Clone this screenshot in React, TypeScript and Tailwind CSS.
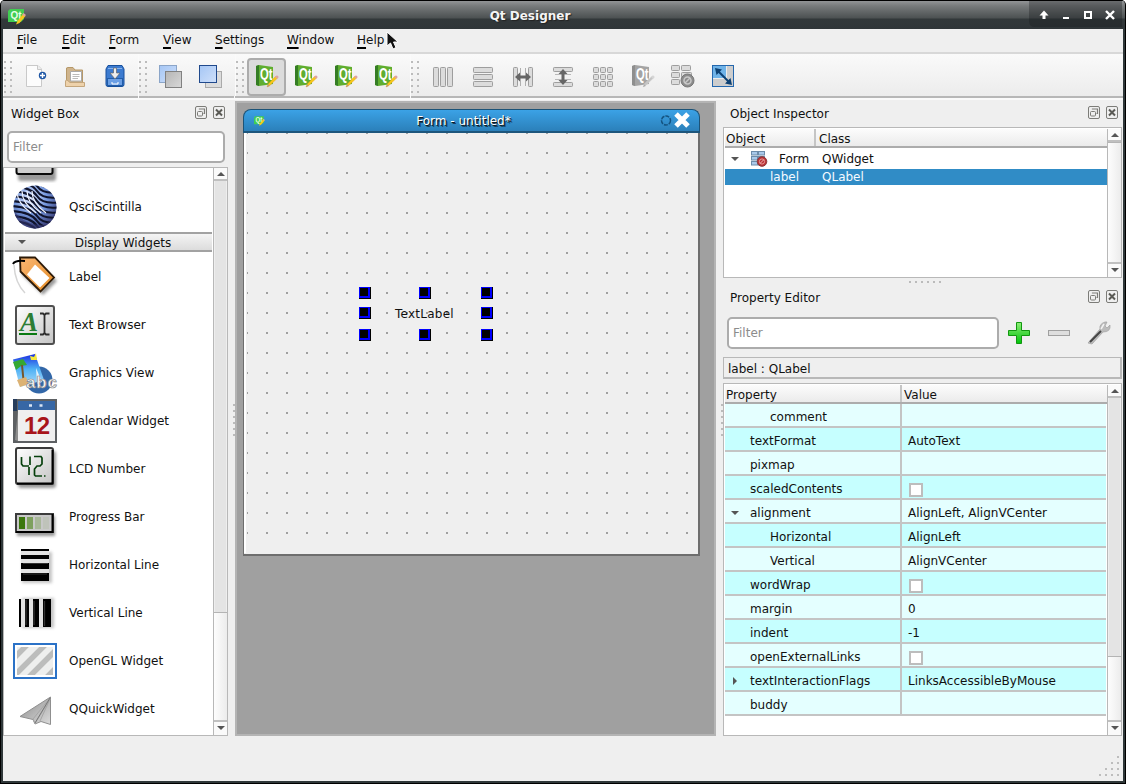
import React from "react";

const DOTS = [0, 1, 2, 3, 4, 5];

function Handle({ w }: { w: string }) {
  return (
    <div className={`${w} h-[42px] shrink-0 border-l border-[#fbfbfb]`}>
      <svg width="10" height="42" className="block" shapeRendering="crispEdges">
        {DOTS.map((i) => (
          <g key={i}>
            <rect x="0" y={7 + i * 6} width="2" height="2" fill="#bcbcbc" />
            <rect x="6" y={7 + i * 6} width="2" height="2" fill="#bcbcbc" />
          </g>
        ))}
      </svg>
    </div>
  );
}

function Tool({ children, active }: { children: React.ReactNode; active?: boolean }) {
  return (
    <div className="flex h-[42px] w-10 shrink-0 items-center justify-center">
      {active ? (
        <div className="ml-px mt-[3px] flex h-[38px] w-10 items-center justify-center rounded-[4px] border-2 border-[#acacac] bg-[#dcdcdc] pb-px">{children}</div>
      ) : (
        <div className="pt-[2px]">{children}</div>
      )}
    </div>
  );
}

function QtIcon({ gray, size = 24 }: { gray?: boolean; size?: number }) {
  const a = gray ? "#a4a4a4" : "#5fae30";
  const b = gray ? "#8e8e8e" : "#357d25";
  return (
    <svg width={size} height={size} viewBox="0 0 24 24" className="block">
      <path d="M1 2 L4 1 L18 3 V20 L4 22 L1 21Z" fill={a} />
      <path d="M1 2 L4 1 V22 L1 21Z" fill={b} />
      <text x="5" y="16" fontFamily="Liberation Sans" fontSize="16.500" fontWeight="700" fill="#fff" textLength="12.500" lengthAdjust="spacingAndGlyphs">Qt</text>
      <path d="M12 23 L13.500 19.800 L20.500 12.500 L22.300 14.300 L15 21.300Z" fill={gray ? "#c4c4c4" : "#f8c818"} stroke={gray ? "#d8d8d8" : "#e59a16"} strokeWidth=".4" />
      <path d="M20 13 L22 11.200 L23.800 13 L22.200 14.800Z" fill={gray ? "#d5d5d5" : "#dda1a1"} />
      <path d="M12 23 L13.300 20.200 L14.800 22Z" fill={gray ? "#aaa" : "#b69a72"} />
    </svg>
  );
}

function SmallQt({ size }: { size: number }) {
  return (
    <svg width={size} height={size} viewBox="0 0 18 18" className="block">
      <path d="M2 2 H16 V12 L13 15 H0 V4Z" fill="#41cd52" />
      <text x="2.5" y="12" fontFamily="Liberation Sans" fontSize="11" fontWeight="700" fill="#e8ffe8" textLength="11" lengthAdjust="spacingAndGlyphs">Qt</text>
      <path d="M8 17.5 L9.5 14 L15 7 L17.5 9 L11.5 16Z" fill="#f6c81c" />
      <path d="M14.3 7.8 L15.5 6 L18 8 L16.6 9.6Z" fill="#dda1a1" />
    </svg>
  );
}

function Cell({ x, y, w, h }: { x: number; y: number; w: number; h: number }) {
  return <rect x={x + 0.5} y={y + 0.5} width={w - 1} height={h - 1} rx=".8" fill="#dcdcdc" stroke="#9e9e9e" />;
}

function ToolIcon({ name }: { name: string }) {
  return (
    <svg width="24" height="24" viewBox="0 0 24 24" className="block">
      <defs>
        <linearGradient id="bl" x1="0" y1="0" x2="1" y2="1"><stop offset="0" stopColor="#a5c6f5" /><stop offset="1" stopColor="#cfe0fa" /></linearGradient>
        <linearGradient id="gr" x1="0" y1="0" x2="1" y2="1"><stop offset="0" stopColor="#b5b5b5" /><stop offset="1" stopColor="#d8d8d8" /></linearGradient>
      </defs>
      {name === "new" && (
        <g>
          <path d="M2.500 1.500 H14 L17.500 5 V22.500 H2.500Z" fill="#fcfcfc" stroke="#c9c9c9" />
          <path d="M13.500 1.500 V5.500 H17.500" fill="#eee" stroke="#c9c9c9" />
          <circle cx="18.500" cy="11.500" r="3.700" fill="#1f57a5" />
          <path d="M18.500 9 V14 M16 11.500 H21" stroke="#fff" strokeWidth="1.400" />
        </g>
      )}
      {name === "open" && (
        <g>
          <path d="M2.500 21 V4 L4 3.500 H9 L11 6 H18.500 V19" fill="#cfb48c" stroke="#b69868" />
          <path d="M6.500 7.500 H17.500 V17 H6.500Z" fill="#fff" stroke="#aaa" />
          <path d="M8.500 10.500 H15.500 M8.500 12.500 H15.500 M8.500 14.500 H14" stroke="#bbb" />
          <path d="M1.500 22.500 V17 Q1.500 16 3 16 L6 18.500 H20.500 V22.500Z" fill="#eed2ab" stroke="#c4a67c" />
        </g>
      )}
      {name === "save" && (
        <g>
          <path d="M4 1.500 H18 L20 5 V20.500 Q20 22.500 18 22.500 H4 Q2 22.500 2 20.500 V5Z" fill="#3c7bd0" stroke="#164f9c" />
          <path d="M4 4.500 H18" stroke="#87b4ed" />
          <rect x="3.500" y="14.500" width="15" height="7" fill="#6a9ee4" stroke="#225da8" />
          <path d="M8 18 V20 H14 V18" fill="none" stroke="#fff" />
          <path d="M9.500 4 H12.500 V9 H16 L11 15 L6 9 H9.500Z" fill="#eee" stroke="#666" strokeWidth=".7" />
        </g>
      )}
      {name === "back" && (
        <g>
          <rect x="1.500" y="1.500" width="17" height="17" fill="url(#bl)" stroke="#8ba5c8" />
          <rect x="7.500" y="7.500" width="16" height="16" fill="url(#gr)" stroke="#818181" />
        </g>
      )}
      {name === "front" && (
        <g>
          <rect x="7.500" y="7.500" width="16" height="16" fill="#dcdcdc" stroke="#aaa" />
          <rect x="1.500" y="1.500" width="17" height="17" fill="url(#bl)" stroke="#20498c" />
        </g>
      )}
      {name === "cols" && <g><Cell x={2} y={3} w={6} h={20} /><Cell x={9} y={3} w={6} h={20} /><Cell x={16} y={3} w={6} h={20} /></g>}
      {name === "rows" && <g><Cell x={2} y={3} w={20} h={6} /><Cell x={2} y={10} w={20} h={6} /><Cell x={2} y={17} w={20} h={6} /></g>}
      {name === "hsplit" && (
        <g>
          <Cell x={2} y={3} w={5} h={20} /><Cell x={17} y={3} w={5} h={20} />
          <path d="M9.500 4 V22 M14.500 4 V22" stroke="#b0b0b0" />
          <path d="M4 13 L9 8.500 V11.500 H15 V8.500 L20 13 L15 17.500 V14.500 H9 V17.500Z" fill="#666" />
        </g>
      )}
      {name === "vsplit" && (
        <g>
          <Cell x={2} y={3} w={20} h={5} /><Cell x={2} y={18} w={20} h={5} />
          <path d="M4 10.500 H20 M4 15.500 H20" stroke="#b8b8b8" />
          <path d="M12 5 L16.500 10 H13.500 V16 H16.500 L12 21 L7.500 16 H10.500 V10 H7.500Z" fill="#666" />
        </g>
      )}
      {name === "grid" && <g>{[3, 10, 17].map((y) => [2, 9, 16].map((x) => <Cell key={`${x}-${y}`} x={x} y={y} w={6} h={6} />))}</g>}
      {name === "break" && (
        <g>
          <Cell x={0} y={1} w={9} h={6} /><Cell x={10} y={1} w={10} h={6} />
          <Cell x={0} y={8} w={9} h={6} /><Cell x={10} y={8} w={11} h={6} /><Cell x={0} y={15} w={9} h={6} />
          <circle cx="16.500" cy="16.500" r="6.500" fill="#8c8c8c" stroke="#777" />
          <circle cx="16.500" cy="16.500" r="3.500" fill="none" stroke="#c8c8c8" strokeWidth="1.500" />
          <path d="M14 19 L19 14" stroke="#c8c8c8" strokeWidth="1.500" />
        </g>
      )}
      {name === "adjust" && (
        <g>
          <rect x="1.500" y="1.500" width="21" height="21" fill="#cdcdcd" stroke="#2467ad" />
          <path d="M2 2 H15 V14 H2Z" fill="#6fb3e8" />
          <path d="M15.500 2 V14.500 H2" fill="none" stroke="#ececec" />
          <path d="M7 7 L18 18" stroke="#0d4173" strokeWidth="2" />
          <path d="M4 4 L11 5.500 L5.500 11Z M21 21 L14 19.500 L19.500 14Z" fill="#0d4173" />
        </g>
      )}
    </svg>
  );
}

function FormGlyph() {
  return (
    <svg width="17" height="16" viewBox="0 0 17 16" className="block">
      {[0, 5, 10].map((y) => (
        <g key={y}>
          <rect x=".5" y={y + 0.5} width="6" height="3.500" fill="#a9c9ea" stroke="#6c8cab" />
          <rect x="7.500" y={y + 0.5} width="6" height="3.500" fill="#a9c9ea" stroke="#6c8cab" />
        </g>
      ))}
      <circle cx="11" cy="10.500" r="4.800" fill="#b93236" stroke="#8b3a3c" />
      <circle cx="11" cy="10.500" r="2.600" fill="none" stroke="#e79a98" />
      <path d="M9.200 12.300 L12.800 8.700" stroke="#f3b6b4" />
    </svg>
  );
}

function WidgetIcon({ name }: { name: string }) {
  return (
    <svg width="44" height="44" viewBox="0 0 44 44" className="block overflow-visible">
      <defs>
        <linearGradient id="panel" x1="0" y1="0" x2="1" y2="1"><stop offset="0" stopColor="#fff" /><stop offset="1" stopColor="#c4c4c4" /></linearGradient>
        <linearGradient id="orange" x1="0" y1="0" x2="1" y2="1"><stop offset="0" stopColor="#fbb774" /><stop offset="1" stopColor="#e38a22" /></linearGradient>
        <linearGradient id="photo" x1="0" y1="0" x2="0" y2="1"><stop offset="0" stopColor="#1a2de0" /><stop offset=".45" stopColor="#4db0f4" /><stop offset="1" stopColor="#b4e0fa" /></linearGradient>
        <radialGradient id="ball" cx=".4" cy=".3" r=".75"><stop offset="0" stopColor="#dfe8ff" /><stop offset=".5" stopColor="#7396dc" /><stop offset="1" stopColor="#34356c" /></radialGradient>
        <linearGradient id="plane" x1="0" y1="0" x2="1" y2="1"><stop offset="0" stopColor="#8a8a8a" /><stop offset="1" stopColor="#dcdcdc" /></linearGradient>
        <filter id="soft" x="-20%" y="-20%" width="150%" height="150%"><feGaussianBlur stdDeviation="1.500" /></filter>
        <clipPath id="ballclip"><circle cx="22" cy="22" r="21.500" /></clipPath>
        <clipPath id="glclip"><rect x="4" y="8" width="36" height="28" /></clipPath>
      </defs>
      {name === "prev" && (
        <g>
          <rect x="5" y="20" width="38" height="19" rx="3" fill="#999" filter="url(#soft)" />
          <rect x="3.500" y="-1" width="36" height="33" rx="2" fill="#cfcfcf" stroke="#0a0a0a" strokeWidth="2" />
        </g>
      )}
      {name === "sci" && (
        <g clipPath="url(#ballclip)">
          <rect width="44" height="44" fill="url(#ball)" />
          {[-14, -9, -4, 1, 6, 11, 16, 21, 26, 31, 36].map((d) => (
            <path key={d} d={`M-2 ${d} Q18 ${d + 1} 24 ${d + 10} T48 ${d + 16}`} fill="none" stroke="#10142c" strokeWidth="2.200" />
          ))}
          {[4, 9, 14, 19].map((d) => (
            <path key={d} d={`M${d} 6 Q${d} 18 ${d + 14} 28`} fill="none" stroke="#f0f4ff" strokeWidth="1.200" />
          ))}
          <path d="M2 27 Q12 40 30 40 Q38 38 42 28 V44 H0Z" fill="#34376f" opacity=".55" />
        </g>
      )}
      {name === "label" && (
        <g>
          <path d="M9 6 H24 L44 26 L30 40 L9 20Z" fill="#999" filter="url(#soft)" />
          <path d="M7 2.500 H22 L41 22.500 L27.500 36.500 L7.500 16.500Z" fill="url(#orange)" stroke="#2c1a08" strokeWidth="1.800" />
          <path d="M22 9.500 L36.500 23 L27 32.500 L14 19.500Z" fill="#fff" />
          <path d="M0 9 Q2 5 12 6" fill="none" stroke="#000" strokeWidth="2" />
          <path d="M1 10 Q2 28 12 38" fill="none" stroke="#d5d5d5" strokeWidth="1.500" />
        </g>
      )}
      {name === "text" && (
        <g>
          <rect x="3" y="3" width="38" height="38" rx="2" fill="url(#panel)" stroke="#4f4f4f" strokeWidth="2" />
          <text x="7" y="28" fontFamily="Liberation Serif" fontStyle="italic" fontWeight="700" fontSize="27" fill="#2c7d35">A</text>
          <path d="M6 31 H24" stroke="#0a7a12" strokeWidth="2" />
          <path d="M27 10.500 H30 L31.500 12 L33 10.500 H36.500 M31.500 12 V30 M27 31.500 H30 L31.500 30 L33 31.500 H36.500" fill="none" stroke="#2d2d2d" strokeWidth="1.800" />
        </g>
      )}
      {name === "graphics" && (
        <g>
          <circle cx="26" cy="29" r="13.500" fill="#3267a8" />
          <path d="M0 8.500 L22 3 L31 29 L7 36Z" fill="url(#photo)" />
          <path d="M0 11 L10 8 L14 14 L8 15 L3 19Z" fill="#35a832" />
          <path d="M9 14 L11 34" stroke="#75572b" strokeWidth="2" />
          <path d="M4 29 L13 26 L16 33 L7 36Z" fill="#dcb274" />
          <path d="M17 5 L21 6 L23 2 L24 9 L18 9Z" fill="#f7e83a" />
          <path d="M23 17 L29 31 L24 33Z" fill="#e5f3fd" />
          <text x="13" y="36.500" fontFamily="Liberation Sans" fontWeight="700" fontSize="17" fill="#f7f7f7" stroke="#888" strokeWidth=".7" textLength="31">abc</text>
        </g>
      )}
      {name === "calendar" && (
        <g>
          <rect x="0" y="0" width="44" height="44" fill="#5d6063" />
          <rect x="0" y="0" width="4" height="12" fill="#263c5b" />
          <rect x="5" y="2" width="37" height="9" fill="#3767a5" />
          <rect x="5" y="11" width="37" height="31" fill="#efefef" />
          <path d="M2 41 L5 11 V42Z" fill="#8d8d8d" />
          <path d="M16 6.500 H19 M26.500 6.500 H29.500" stroke="#d9e5f4" strokeWidth="2.500" />
          <text x="11" y="35" fontFamily="Liberation Sans" fontWeight="700" fontSize="24" fill="#a8141a" textLength="26">12</text>
        </g>
      )}
      {name === "lcd" && (
        <g>
          <rect x="5" y="4" width="38" height="37" rx="3" fill="#999" filter="url(#soft)" />
          <rect x="3" y="1" width="37" height="36" rx="2" fill="url(#panel)" stroke="#3a3a3a" strokeWidth="2" />
          <path d="M39.500 3 V36.500 H4" fill="none" stroke="#000" strokeWidth="2" />
          <path d="M8.500 10 V17 L10 19 H16 M17 9.500 V18 M16 20 V28 M21 9.500 H28 L29 11 V17 L27 19 H24 L21.500 22 V28 L22.500 29 H29 M31 29 H32.500" fill="none" stroke="#06400c" strokeWidth="1.700" />
        </g>
      )}
      {name === "progress" && (
        <g>
          <rect x="4" y="21" width="38" height="20" fill="#999" filter="url(#soft)" />
          <rect x="3" y="19" width="37" height="18" fill="#c8c8c8" stroke="#3c3c3c" strokeWidth="2" />
          <path d="M39.500 19 V37 H3" fill="none" stroke="#000" strokeWidth="2" />
          <rect x="6" y="22" width="6" height="12" fill="#3c770e" /><rect x="14" y="22" width="6" height="12" fill="#7ea05e" />
          <rect x="22" y="22" width="6" height="12" fill="#a9b89a" /><rect x="30" y="22" width="6" height="12" fill="#bfc3ba" />
        </g>
      )}
      {name === "hline" && (
        <g>
          <rect x="9" y="9" width="30" height="31" fill="#c5c5c5" filter="url(#soft)" />
          <rect x="8" y="8" width="28" height="22" fill="#e2e2e2" />
          <rect x="8" y="6" width="28" height="2" /><rect x="8" y="12" width="28" height="4" /><rect x="8" y="20" width="28" height="6" /><rect x="8" y="30" width="28" height="8" />
          <path d="M10 20.500 H35 M10 31 H34" stroke="#333" />
        </g>
      )}
      {name === "vline" && (
        <g>
          <rect x="9" y="7" width="32" height="30" fill="#c5c5c5" filter="url(#soft)" />
          <rect x="8" y="8" width="22" height="28" fill="#e2e2e2" />
          <rect x="6" y="8" width="2" height="28" /><rect x="12" y="8" width="4" height="28" /><rect x="20" y="8" width="6" height="28" /><rect x="30" y="8" width="8" height="28" />
          <path d="M13 9 V34 M21 10 V34 M31.500 10 V35" stroke="#333" strokeWidth="1.300" />
        </g>
      )}
      {name === "gl" && (
        <g>
          <rect x="1" y="5" width="42" height="34" fill="#fff" stroke="#2b72c7" strokeWidth="2" />
          <rect x="4" y="8" width="36" height="28" fill="#eeefee" />
          <g clipPath="url(#glclip)" stroke="#bcbdbc" strokeWidth="5.500">
            <path d="M-4 24 L18 2 M0 38 L32 6 M14 40 L46 8 M30 42 L50 22" />
          </g>
        </g>
      )}
      {name === "quick" && (
        <g>
          <path d="M37.500 10 V37.500 L28 34.500 L22 37 L20 32.500 L7 29.500Z" fill="url(#plane)" stroke="#8f8f8f" />
          <path d="M37 11 L20 32 L22 36.500 L37 12 L27 34" fill="none" stroke="#a6a6a6" />
          <path d="M37 11 L22 36" stroke="#777" />
        </g>
      )}
    </svg>
  );
}

function DockTitle({ title, pad }: { title: string; pad: string }) {
  return (
    <div className={`flex h-[26px] shrink-0 items-center justify-between ${pad}`}>
      <span className="pt-[2px]">{title}</span>
      <svg width="30" height="13" className="mb-px block" fill="none" stroke="#7c7c78">
        <rect x=".5" y=".5" width="11" height="12" rx="1.500" />
        <rect x="2.500" y="5.500" width="5" height="4.500" rx="1" />
        <path d="M4.500 3.500 V3 H9.500 V7.500 H8.500" strokeWidth="1.200" />
        <rect x="18.500" y=".5" width="11" height="12" rx="1.500" />
        <path d="M21 3.500 L27 9.500 M27 3.500 L21 9.500" strokeWidth="2" stroke="#5a5a55" />
      </svg>
    </div>
  );
}

function Arrow({ dir }: { dir: "up" | "down" | "right" }) {
  const d = dir === "up" ? "M0 5 L4 1 L8 5Z" : dir === "down" ? "M0 1 H8 L4 5Z" : "M2 -1 L6 3 L2 7Z";
  return <svg width="8" height="6" className="block shrink-0 overflow-visible"><path d={d} fill="#555" /></svg>;
}

function ScrollBar({ before, thumb }: { before: string; thumb: string }) {
  return (
    <div className="flex w-[14px] shrink-0 flex-col border-l border-[#b8b8b8] bg-[#e4e4e4]">
      <div className="flex h-[13px] shrink-0 items-center justify-center border-b-2 border-[#c0c0c0] bg-[#fafafa]"><Arrow dir="up" /></div>
      <div className={`${before} shrink-0 border-x border-[#eee]`} />
      <div className={`${thumb} border-t border-[#b4b4b4] bg-linear-to-r from-[#fdfdfd] to-[#ececec]`} />
      <div className="flex h-[15px] shrink-0 items-center justify-center border-t-2 border-[#c0c0c0] bg-[#fafafa] pb-px"><Arrow dir="down" /></div>
    </div>
  );
}

const MENUS: [string, string][] = [["File", "w-[45px]"], ["Edit", "w-[47px]"], ["Form", "w-[54px]"], ["View", "w-[52px]"], ["Settings", "w-[72px]"], ["Window", "w-[70px]"], ["Help", "w-10"]];

const WIDGETS: [string, string][] = [
  ["Label", "label"], ["Text Browser", "text"], ["Graphics View", "graphics"], ["Calendar Widget", "calendar"], ["LCD Number", "lcd"],
  ["Progress Bar", "progress"], ["Horizontal Line", "hline"], ["Vertical Line", "vline"], ["OpenGL Widget", "gl"], ["QQuickWidget", "quick"],
];

type Prop = { name: string; value?: string; check?: boolean; child?: boolean; arrow?: "down" | "right" };
const PROPS: Prop[] = [
  { name: "comment", child: true },
  { name: "textFormat", value: "AutoText" },
  { name: "pixmap" },
  { name: "scaledContents", check: true },
  { name: "alignment", value: "AlignLeft, AlignVCenter", arrow: "down" },
  { name: "Horizontal", value: "AlignLeft", child: true },
  { name: "Vertical", value: "AlignVCenter", child: true },
  { name: "wordWrap", check: true },
  { name: "margin", value: "0" },
  { name: "indent", value: "-1" },
  { name: "openExternalLinks", check: true },
  { name: "textInteractionFlags", value: "LinksAccessibleByMouse", arrow: "right" },
  { name: "buddy" },
];

const GRIPS = ["left-[115px] top-[154px]", "left-[175px] top-[154px]", "left-[237px] top-[154px]", "left-[115px] top-[174px]", "left-[237px] top-[174px]", "left-[115px] top-[196px]", "left-[175px] top-[196px]", "left-[237px] top-[196px]"];

function WidgetRow({ label, icon }: { label: string; icon: string }) {
  return (
    <div className="flex h-12 shrink-0 items-center gap-3 pl-2">
      <WidgetIcon name={icon} />
      <span>{label}</span>
    </div>
  );
}

function TitleBar() {
  return (
    <div className="flex h-[29px] shrink-0 border-t border-black bg-[linear-gradient(#929496_0px,#777a7b_5px,#4c5152_17px,#32383a_18px,#2f3538_28px)] pl-[7px] pr-[3px]">
      <div className="w-[18px] pt-[6px]"><SmallQt size={18} /></div>
      <div className="flex flex-1 items-center justify-center pl-[5px] pt-px font-bold text-[#f4f4f4] [text-shadow:1px_1px_1px_#222]">Qt Designer</div>
      <svg width="93" height="26" className="block" fill="none" stroke="#fff">
        <path d="M0 0 H93 V26 H6 Q0 26 0 20Z" fill="#15191b" fillOpacity=".32" stroke="none" />
        <path d="M15 18 V12" strokeWidth="3" /><path d="M10.500 14.500 L15 9.500 L19.500 14.500Z" fill="#fff" stroke="none" />
        <path d="M34 17 H40" strokeWidth="2" />
        <rect x="56" y="11" width="6" height="6" strokeWidth="2" />
        <path d="M77 10 L85 18 M85 10 L77 18" strokeWidth="2.400" />
      </svg>
    </div>
  );
}

function ToolLine({ w }: { w: string }) {
  return <div className={`${w} h-[2px] bg-[#b7b7b7]`} />;
}

export default function App() {
  return (
    <div className="relative flex h-[784px] w-[1126px] flex-col overflow-hidden rounded-t-[5px] border-x border-b border-black bg-[#2f3538] font-['DejaVu_Sans',sans-serif] text-[12px] leading-[14px] text-[#111]">
      <TitleBar />
      <div className="flex h-[754px] flex-col border-x-2 border-b-2 border-[#2f3739] bg-[#efefef]">
        <div className="flex h-[23px] shrink-0 pl-[14px] pt-1">
          {MENUS.map(([m, w]) => (
            <div key={m} className={`${w} shrink-0`}>
              <span className="underline decoration-black decoration-2 underline-offset-[3px]">{m[0]}</span>
              {m.slice(1)}
            </div>
          ))}
        </div>
        <div className="h-[2px] shrink-0 bg-[#d8d8d8]" />
        <div className="flex h-[42px] shrink-0 bg-linear-to-b from-[#fafafa] to-[#ececec]">
          <Handle w="w-[13px]" />
          <Tool><ToolIcon name="new" /></Tool>
          <Tool><ToolIcon name="open" /></Tool>
          <Tool><ToolIcon name="save" /></Tool>
          <div className="w-[2px]" />
          <Handle w="w-3" />
          <Tool><ToolIcon name="back" /></Tool>
          <Tool><ToolIcon name="front" /></Tool>
          <div className="w-[5px]" />
          <Handle w="w-[11px]" />
          <Tool active><QtIcon /></Tool>
          <Tool><QtIcon /></Tool>
          <Tool><QtIcon /></Tool>
          <Tool><QtIcon /></Tool>
          <div className="w-1" />
          <Handle w="w-[13px]" />
          {["cols", "rows", "hsplit", "vsplit", "grid"].map((n) => <Tool key={n}><ToolIcon name={n} /></Tool>)}
          <Tool><QtIcon gray /></Tool>
          <Tool><ToolIcon name="break" /></Tool>
          <Tool><ToolIcon name="adjust" /></Tool>
        </div>
        <div className="flex h-1 shrink-0 gap-px bg-[#fafafa]">
          <ToolLine w="w-[135px]" /><ToolLine w="w-[95px]" /><ToolLine w="w-[175px]" /><ToolLine w="flex-1" />
        </div>
        <div className="flex h-[636px] shrink-0">
          <div className="flex w-[225px] shrink-0 flex-col">
            <DockTitle title="Widget Box" pad="pl-2 pr-[3px]" />
            <div className="mx-1 mt-[5px] flex h-8 w-[218px] shrink-0 items-center rounded-[5px] border-2 border-[#acacac] bg-white pl-1 text-[#8c8c8c]">Filter</div>
            <div className="mt-1 flex h-[569px] border border-[#b8b8b8] bg-white">
              <div className="flex w-[209px] flex-col overflow-hidden pl-px">
                <div className="flex h-[15px] shrink-0 items-end overflow-hidden pb-[3px] pl-2"><div className="-mb-[6px]"><WidgetIcon name="prev" /></div></div>
                <WidgetRow label="QsciScintilla" icon="sci" />
                <div className="mt-px flex h-[20px] w-[207px] shrink-0 items-center border-y-2 border-[#a2a2a2] bg-linear-to-b from-[#f4f4f4] to-[#dcdcdc] pl-[13px]">
                  <Arrow dir="down" />
                  <span className="flex-1 pl-2 pt-[2px] text-center">Display Widgets</span>
                </div>
                <div className="h-px shrink-0" />
                {WIDGETS.map(([l, i]) => <WidgetRow key={l} label={l} icon={i} />)}
              </div>
              <ScrollBar before="h-[431px]" thumb="flex-1" />
            </div>
          </div>
          <div className="flex w-[7px] shrink-0 items-center justify-end pt-[6px]">
            <svg width="3" height="34">{DOTS.map((i) => <rect key={i} x="1" y={i * 6} width="2" height="2" fill="#bbb" />)}</svg>
          </div>
          <div className="mt-px h-[635px] w-[481px] shrink-0 border-2 border-[#b4b4b4] bg-[#a0a0a0] pl-[6px] pt-[6px]">
            <div className="h-[447px] w-[457px]">
              <div className="flex h-6 items-center rounded-t-[8px] border border-b-2 border-[#1c5377] border-b-[#1d567c] bg-linear-to-b from-[#3ba2e6] to-[#2b80ba] pl-[10px]">
                <SmallQt size={11} />
                <span className="flex-1 pl-[4px] pt-px text-center text-white [text-shadow:1px_1px_0_#0b1b27,2px_2px_0_#0b1b27aa]">Form - untitled*</span>
                <svg width="41" height="20" className="mt-px block">
                  <circle cx="8" cy="9.500" r="4.500" fill="none" stroke="#145380" strokeWidth="1.500" strokeDasharray="4 1" />
                  <path d="M18 3 L30 15 M30 3 L18 15" stroke="#fff" strokeWidth="5" />
                </svg>
              </div>
              <div className="relative h-[423px] overflow-hidden border-b-2 border-l border-r-2 border-[#6e6e6e] bg-[#efefef]">
                <svg width="453" height="420" className="block" shapeRendering="crispEdges">
                  <defs><pattern id="dots" x="2" y="-1" width="20" height="20" patternUnits="userSpaceOnUse"><rect width="2" height="2" fill="#a0a0a0" /></pattern></defs>
                  <rect width="2" height="420" fill="#fff" />
                  <rect x="3" width="450" height="404" fill="url(#dots)" />
                </svg>
                <span className="absolute left-[151px] top-[174px] tracking-[0.25px]">TextLabel</span>
                {GRIPS.map((g) => (
                  <div key={g} className={`absolute size-3 border-b border-r border-black bg-[#0000ff] pl-px pt-px ${g}`}><div className="size-2 bg-black" /></div>
                ))}
              </div>
            </div>
          </div>
          <div className="flex w-[7px] shrink-0 items-center justify-end pt-[6px]">
            <svg width="3" height="34">{DOTS.map((i) => <rect key={i} x="1" y={i * 6} width="2" height="2" fill="#bbb" />)}</svg>
          </div>
          <div className="flex w-[399px] shrink-0 flex-col">
            <DockTitle title="Object Inspector" pad="pl-[7px] pr-1" />
            <div className="mt-px flex h-[151px] shrink-0 border border-[#b8b8b8] bg-white pt-px">
              <div className="w-[383px] pl-px">
                <div className="flex h-[19px] items-center border-b-2 border-[#acacac] bg-linear-to-b from-[#fcfcfc] to-[#ebebeb]">
                  <div className="h-[17px] w-[91px] border-r-2 border-[#c5c5c5] pl-px pt-[3px]">Object</div>
                  <div className="pl-[3px] pt-[3px]">Class</div>
                </div>
                <div className="flex h-[21px] items-center pl-[6px]">
                  <Arrow dir="down" />
                  <div className="ml-[12px] w-7"><FormGlyph /></div>
                  <span className="w-[43px]">Form</span>
                  <span>QWidget</span>
                </div>
                <div className="flex h-4 items-center bg-[#308cc6] pl-[45px] text-[#f4faff]">
                  <span className="w-[52px]">label</span>
                  <span>QLabel</span>
                </div>
              </div>
              <ScrollBar before="h-0" thumb="flex-1" />
            </div>
            <div className="flex h-[6px] shrink-0 items-end justify-center pb-px pl-1">
              <svg width="32" height="2">{DOTS.map((i) => <rect key={i} x={i * 6} width="2" height="2" fill="#bbb" />)}</svg>
            </div>
            <DockTitle title="Property Editor" pad="pl-[7px] pr-1" />
            <div className="mt-[7px] flex h-8 shrink-0 items-center pl-1">
              <div className="flex h-8 w-[272px] items-center rounded-[5px] border-2 border-[#acacac] bg-white pl-1 text-[#8c8c8c]">Filter</div>
              <div className="flex gap-[17px] pl-[8px]">
                <svg width="24" height="24" className="block">
                  <defs><linearGradient id="plus" x1="0" y1="0" x2="0" y2="1"><stop offset="0" stopColor="#8fee78" /><stop offset="1" stopColor="#00c40a" /></linearGradient></defs>
                  <path d="M9.500 1.500 H14.500 V9.500 H22.500 V14.500 H14.500 V22.500 H9.500 V14.500 H1.500 V9.500 H9.500Z" fill="url(#plus)" stroke="#11970f" />
                </svg>
                <svg width="22" height="24" className="block"><rect x=".5" y="9.500" width="21" height="5" fill="#dedede" stroke="#a0a0a0" /></svg>
                <svg width="24" height="24" className="block">
                  <path d="M1 22 L13 8 Q12 3 18 1 L20 1 L18 5 L20 7 L23 4 Q24 11 16 11 L5 23Z" fill="#bcbcbc" stroke="#a0a0a0" strokeWidth=".7" />
                  <path d="M3 21 L14 10" stroke="#444" strokeWidth="2" /><path d="M14 8 L17 3" stroke="#f2f2f2" strokeWidth="1.500" />
                </svg>
              </div>
            </div>
            <div className="mt-2 flex h-[22px] shrink-0 items-center border border-b-2 border-r-2 border-[#b8b8b8] pl-1 pt-[3px]">label : QLabel</div>
            <div className="mt-1 flex h-[353px] shrink-0 border border-[#b8b8b8] bg-white pt-px">
              <div className="w-[383px] pl-px">
                <div className="flex h-[19px] items-center border-b-2 border-[#acacac] bg-linear-to-b from-[#fcfcfc] to-[#ebebeb]">
                  <div className="h-[17px] w-[177px] border-r-2 border-[#c5c5c5] pl-px pt-[3px]">Property</div>
                  <div className="pl-[2px] pt-[3px]">Value</div>
                </div>
                {PROPS.map((p, i) => (
                  <div key={p.name} className={`flex h-6 w-[381px] border-b-2 border-[#c4c4c4] ${i % 2 ? "bg-[#c6ffff]" : "bg-[#e4ffff]"}`}>
                    <div className={`flex w-[177px] items-center border-r-2 border-[#c4c4c4] pt-1 ${p.child ? "pl-[45px]" : p.arrow ? "pl-[6px]" : "pl-[25px]"}`}>
                      {p.arrow && <div className="w-[19px]"><Arrow dir={p.arrow} /></div>}
                      {p.name}
                    </div>
                    <div className="flex items-center pl-[6px] pt-1">
                      {p.check ? <div className="ml-px mt-[2px] size-[14px] border-2 border-[#bdbdbd] bg-white" /> : p.value}
                    </div>
                  </div>
                ))}
              </div>
              <ScrollBar before="h-[258px]" thumb="flex-1" />
            </div>
          </div>
        </div>
        <div className="flex flex-1 items-end justify-end pb-[5px] pr-[3px]">
          <svg width="21" height="20" className="block" fill="#bdbdbd">
            {[0, 1, 2, 3].map((r) => [0, 1, 2, 3].slice(3 - r).map((c) => <rect key={`${r}-${c}`} x={c * 6} y={r * 6} width="2" height="2" />))}
          </svg>
        </div>
      </div>
      <svg width="14" height="20" className="absolute left-[385px] top-[31px]">
        <path d="M1 1 V15 L4.500 12 L7 18 L10 16.500 L7.500 11 H12Z" fill="#111" stroke="#fff" />
      </svg>
    </div>
  );
}
